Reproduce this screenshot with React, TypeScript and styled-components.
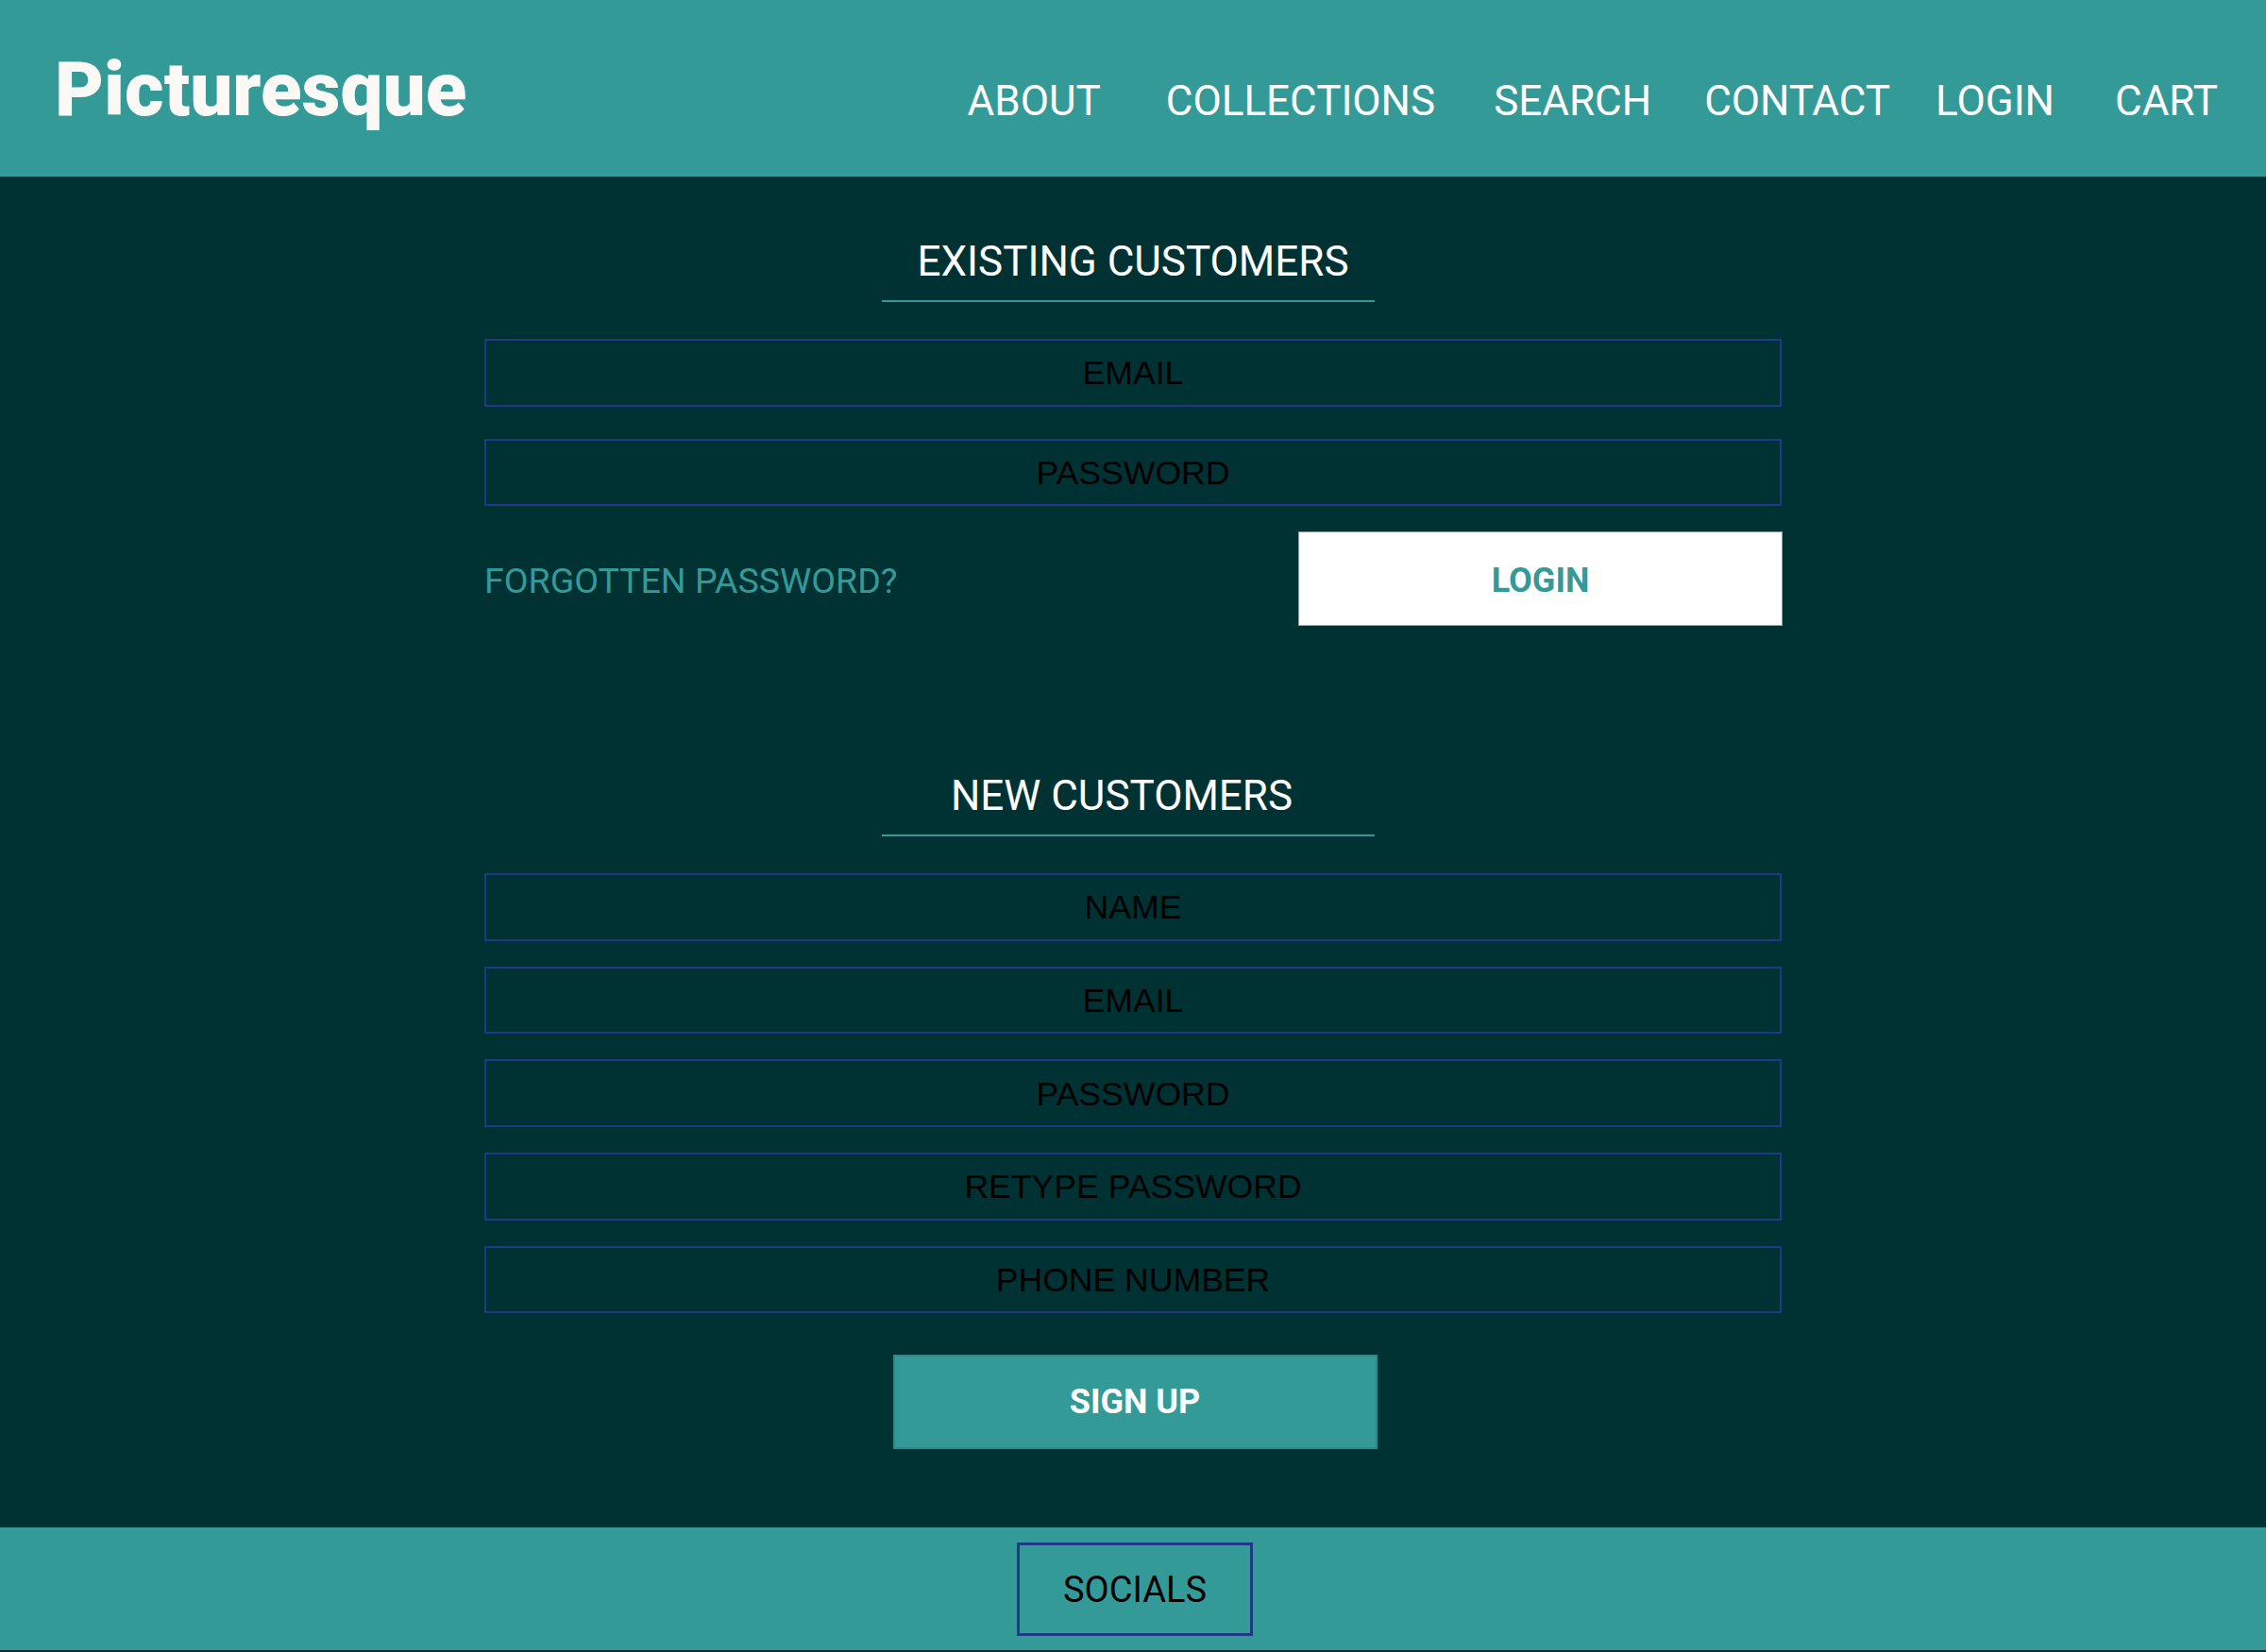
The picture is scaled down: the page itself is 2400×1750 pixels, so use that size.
import React from "react";
import styled, { createGlobalStyle } from "styled-components";

const TEAL = "#349a98";
const DARK = "#003234";
const BLUE = "#1f3987";

const GlobalStyle = createGlobalStyle`
  html, body {
    margin: 0;
    padding: 0;
    background: ${DARK};
    font-family: Roboto, "Liberation Sans", Arial, sans-serif;
  }
  * { box-sizing: border-box; }
`;

const Header = styled.header`
  display: flex;
  align-items: baseline;
  justify-content: space-between;
  height: 187px;
  padding: 55px 51px 0 58px;
  background: ${TEAL};
`;

const Logo = styled.h1`
  margin: 0;
  font: 900 80px/1 Roboto, sans-serif;
  color: #fbf9f6;
`;

const Nav = styled.nav`
  display: flex;
  align-items: baseline;
`;

const NavLink = styled.a<{ $gap: number }>`
  margin-left: ${(p) => p.$gap}px;
  font: 400 44px/1 Roboto, sans-serif;
  color: #ffffff;
  text-decoration: none;
`;

const Main = styled.main`
  display: flex;
  flex-direction: column;
  align-items: center;
  padding: 68px 0 83px;
`;

const Section = styled.section<{ $top: number }>`
  width: 1374px;
  display: flex;
  flex-direction: column;
  margin-top: ${(p) => p.$top}px;
`;

const SectionTitle = styled.h2<{ $offset: number }>`
  width: 522px;
  margin: 0 0 39px 421px;
  padding: 0 ${(p) => Math.max(0, -p.$offset * 2)}px 19px
    ${(p) => Math.max(0, p.$offset * 2)}px;
  border-bottom: 2px solid ${TEAL};
  font: 400 44px/1 Roboto, sans-serif;
  color: #ffffff;
  text-align: center;
`;

const FieldList = styled.div<{ $gap: number }>`
  display: flex;
  flex-direction: column;
  gap: ${(p) => p.$gap}px;
`;

const Field = styled.input`
  width: 100%;
  height: 71.6px;
  padding: 2px 0 0;
  border: 2px solid ${BLUE};
  background: transparent;
  outline: none;
  font: 400 35.6px "Liberation Sans", Arial, sans-serif;
  color: #000;
  text-align: center;
  &::placeholder {
    color: #000;
    opacity: 1;
  }
`;

const ActionRow = styled.div`
  display: flex;
  align-items: center;
  justify-content: space-between;
  margin-top: 27px;
`;

const ForgotLink = styled.a`
  padding-top: 5px;
  font: 400 37.5px/1 Roboto, sans-serif;
  color: ${TEAL};
  text-decoration: none;
`;

const LoginButton = styled.button`
  width: 513px;
  height: 100px;
  margin-right: -1px;
  padding: 3px 0 0;
  background: #ffffff;
  border: 1px solid #8ea6a6;
  font: 700 36px/1 Roboto, sans-serif;
  color: ${TEAL};
`;

const SignUpButton = styled.button`
  align-self: center;
  width: 513px;
  height: 100px;
  margin: 44px 0 0 4px;
  background: ${TEAL};
  border: 2px solid #2e8886;
  font: 700 36px/1 Roboto, sans-serif;
  color: #ffffff;
`;

const Footer = styled.footer`
  display: flex;
  justify-content: center;
  height: 130px;
  padding-top: 16px;
  background: ${TEAL};
`;

const SocialsBox = styled.div`
  display: flex;
  align-items: center;
  justify-content: center;
  width: 250px;
  height: 99px;
  margin-left: 4px;
  border: 3px solid ${BLUE};
  font: 400 38px/1 Roboto, sans-serif;
  color: #000;
`;

const navItems: { label: string; gap: number }[] = [
  { label: "ABOUT", gap: 0 },
  { label: "COLLECTIONS", gap: 69 },
  { label: "SEARCH", gap: 62 },
  { label: "CONTACT", gap: 56 },
  { label: "LOGIN", gap: 48 },
  { label: "CART", gap: 64 },
];

export default function App() {
  return (
    <>
      <GlobalStyle />
      <Header>
        <Logo>Picturesque</Logo>
        <Nav>
          {navItems.map((n) => (
            <NavLink key={n.label} href="#" $gap={n.gap}>
              {n.label}
            </NavLink>
          ))}
        </Nav>
      </Header>
      <Main>
        <Section $top={0}>
          <SectionTitle $offset={5}>EXISTING CUSTOMERS</SectionTitle>
          <FieldList $gap={34}>
            <Field placeholder="EMAIL" />
            <Field placeholder="PASSWORD" type="password" />
          </FieldList>
          <ActionRow>
            <ForgotLink href="#">FORGOTTEN PASSWORD?</ForgotLink>
            <LoginButton>LOGIN</LoginButton>
          </ActionRow>
        </Section>
        <Section $top={158}>
          <SectionTitle $offset={-7}>NEW CUSTOMERS</SectionTitle>
          <FieldList $gap={27}>
            <Field placeholder="NAME" />
            <Field placeholder="EMAIL" />
            <Field placeholder="PASSWORD" type="password" />
            <Field placeholder="RETYPE PASSWORD" type="password" />
            <Field placeholder="PHONE NUMBER" />
          </FieldList>
          <SignUpButton>SIGN UP</SignUpButton>
        </Section>
      </Main>
      <Footer>
        <SocialsBox>SOCIALS</SocialsBox>
      </Footer>
    </>
  );
}
